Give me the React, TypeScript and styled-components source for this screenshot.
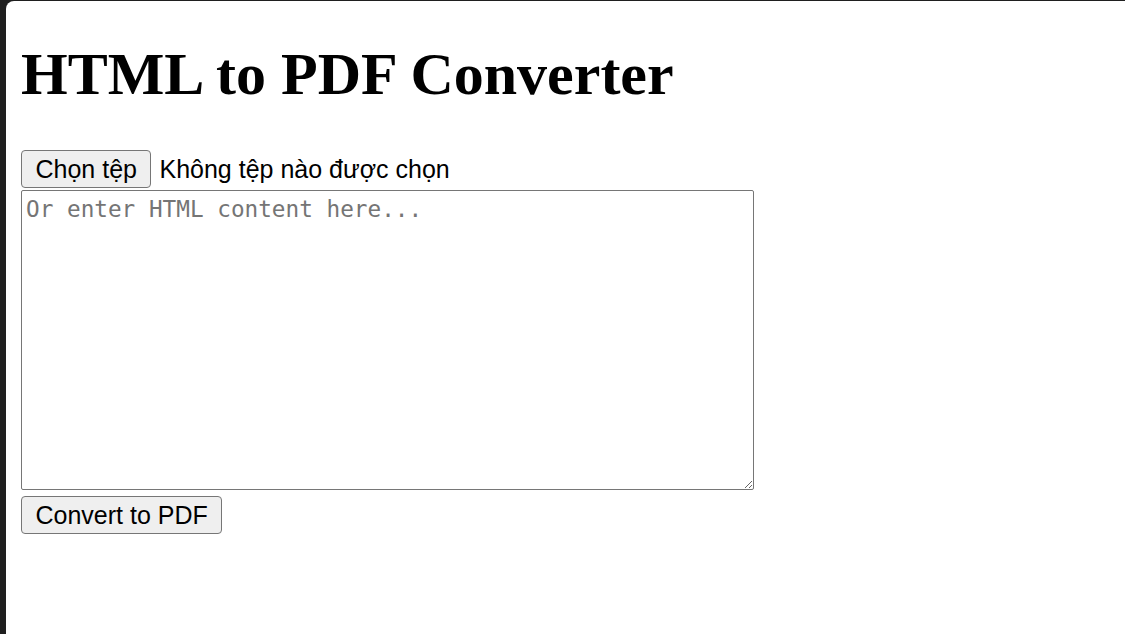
import React from "react";
import styled, { createGlobalStyle } from "styled-components";

const Global = createGlobalStyle`
  html, body { margin: 0; padding: 0; background: #1f1f1f; }
  #root { min-height: 100vh; }
`;

const Frame = styled.div`
  height: 634px;
  background: #1f1f1f;
  padding: 1px 0 0 6px;
  box-sizing: border-box;
  overflow: hidden;
`;

const Page = styled.main`
  height: 100%;
  background: #ffffff;
  border-top-left-radius: 8px;
  padding: 0 15px;
  display: flex;
  flex-direction: column;
  align-items: flex-start;
`;

const Title = styled.h1`
  margin: 39px 0 41px;
  font-family: "Liberation Serif", "Times New Roman", serif;
  font-weight: 700;
  font-size: 60px;
  line-height: 69px;
  color: #000;
`;

const FileRow = styled.div`
  display: flex;
  align-items: center;
  gap: 8px;
  height: 38px;
  margin-bottom: 2px;
`;

const HiddenInput = styled.input`
  display: none;
`;

const NativeButton = styled.button<{ $pad?: number }>`
  box-sizing: border-box;
  height: 38px;
  padding: 0 ${(p) => p.$pad ?? 14}px;
  font-family: "Liberation Sans", Arial, sans-serif;
  font-size: 25px;
  color: #000;
  background: #efefef;
  border: 1px solid #767676;
  border-radius: 4px;
  cursor: pointer;
  display: inline-flex;
  align-items: center;
`;

const FileButton = styled(NativeButton).attrs({ as: "label" })``;

const FileStatus = styled.span`
  font-family: "Liberation Sans", Arial, sans-serif;
  font-size: 25px;
  color: #000;
`;

const Editor = styled.textarea`
  box-sizing: border-box;
  width: 733px;
  height: 300px;
  margin: 0 0 6px;
  padding: 4px 4px;
  border: 1px solid #767676;
  border-radius: 2px;
  font-family: "DejaVu Sans Mono", "Liberation Mono", monospace;
  font-size: 22.7px;
  line-height: 28px;
  color: #000;
  resize: both;
  outline: none;
  &::placeholder {
    color: #757575;
  }
`;

export default function App() {
  return (
    <>
      <Global />
      <Frame>
        <Page>
          <Title>HTML to PDF Converter</Title>
          <FileRow>
            <FileButton htmlFor="file" $pad={13.5}>Chọn tệp</FileButton>
            <HiddenInput id="file" type="file" accept=".html,.htm" />
            <FileStatus>Không tệp nào được chọn</FileStatus>
          </FileRow>
          <Editor placeholder="Or enter HTML content here..." />
          <NativeButton $pad={13.5}>Convert to PDF</NativeButton>
        </Page>
      </Frame>
    </>
  );
}
